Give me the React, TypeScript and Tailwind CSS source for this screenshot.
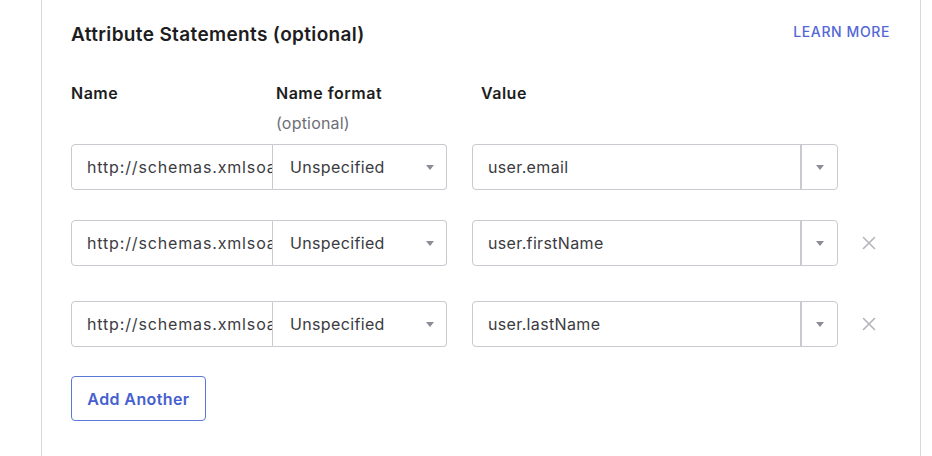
import React from "react";

type Row = { value: string; removable: boolean; mt: string };

const rows: Row[] = [
  { value: "user.email", removable: false, mt: "mt-[11px]" },
  { value: "user.firstName", removable: true, mt: "mt-[30px]" },
  { value: "user.lastName", removable: true, mt: "mt-[35px]" },
];

function Caret() {
  return (
    <svg width="8" height="5" viewBox="0 0 8 5" className="shrink-0">
      <path d="M0 0 L8 0 L4 5 Z" fill="#8c8c96" />
    </svg>
  );
}

function CloseIcon() {
  return (
    <svg width="14" height="14" viewBox="0 0 14 14">
      <path d="M1.5 1.5 L12.5 12.5 M12.5 1.5 L1.5 12.5" stroke="#b4b4ba" strokeWidth="1.6" strokeLinecap="round" />
    </svg>
  );
}

function StatementRow({ row }: { row: Row }) {
  return (
    <div className={`flex items-center ${row.mt}`}>
      <div className="flex h-[46px] w-[376px]">
        <div className="flex h-full w-[202px] items-center overflow-hidden whitespace-nowrap rounded-l-[4px] border border-[#c9c9cf] pl-[15px] text-[16px] tracking-[0.85px] text-[#3b3b42]">
          http://schemas.xmlsoap.org/ws/2005/05/identity/claims/emailaddress
        </div>
        <div className="flex h-full flex-1 items-center justify-between rounded-r-[4px] border border-l-0 border-[#c9c9cf] pl-[17px] pr-[12px] text-[16px] tracking-[0.35px] text-[#3b3b42]">
          <span>Unspecified</span>
          <Caret />
        </div>
      </div>
      <div className="ml-[25px] flex h-[46px] w-[366px] rounded-[4px] border border-[#c9c9cf]">
        <div className="flex flex-1 items-center pl-[15px] text-[16px] tracking-[0.35px] text-[#3b3b42]">{row.value}</div>
        <div className="flex w-[37px] items-center justify-center border-l-2 border-[#c9c9cf]">
          <Caret />
        </div>
      </div>
      {row.removable && (
        <button className="ml-[21px] flex h-[20px] w-[20px] items-center justify-center">
          <CloseIcon />
        </button>
      )}
    </div>
  );
}

export default function App() {
  return (
    <div
      className="h-[456px] w-[932px] overflow-hidden bg-white"
      style={{ fontFamily: "Inter, 'Noto Sans', sans-serif" }}
    >
      <div className="ml-[41px] h-full w-[880px] border-x border-[#d6d6db] pl-[29px] pr-[30px] pt-[22px]">
        <div className="flex items-start justify-between">
          <h2 className="text-[19px] font-semibold leading-[26px] tracking-[0.35px] text-[#1d1d21]">
            Attribute Statements (optional)
          </h2>
          <a className="mt-[1px] text-[14px] font-medium leading-[18px] tracking-[0.6px] text-[#5467d6]">
            LEARN MORE
          </a>
        </div>

        <div className="mt-[35px] flex text-[16px] leading-[20px]">
          <div className="w-[205px] font-semibold tracking-[0.5px] text-[#1d1d21]">Name</div>
          <div className="w-[205px]">
            <div className="font-semibold tracking-[0.5px] text-[#1d1d21]">Name format</div>
            <div className="mt-[10px] tracking-[0.2px] text-[#6e6e78]">(optional)</div>
          </div>
          <div className="font-semibold tracking-[0.5px] text-[#1d1d21]">Value</div>
        </div>

        {rows.map((r) => (
          <StatementRow key={r.value} row={r} />
        ))}

        <button className="mt-[29px] flex h-[45px] w-[135px] items-center justify-center rounded-[4px] border border-[#5b7ad8] text-[16px] font-semibold tracking-[0.4px] text-[#4660cf]">
          Add Another
        </button>
      </div>
    </div>
  );
}
